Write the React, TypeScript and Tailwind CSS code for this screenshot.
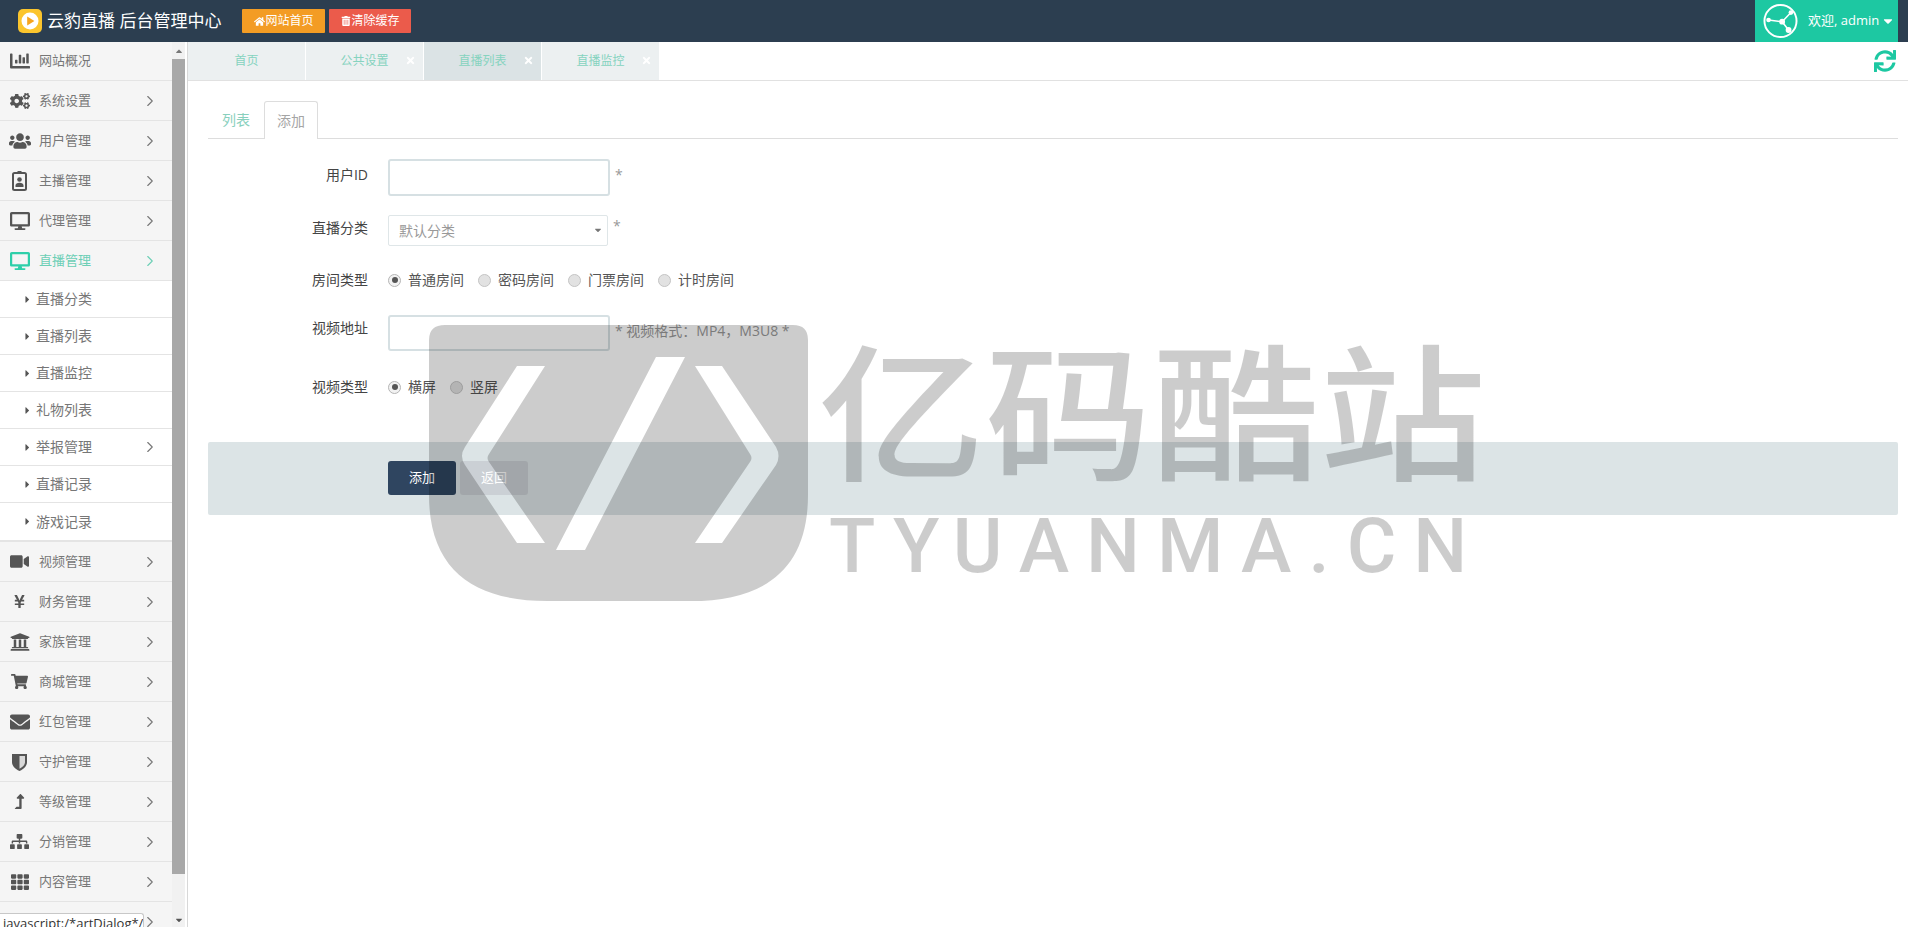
import type { ReactNode } from "react";
import { ChevronRight } from "lucide-react";
import {
  FaCaretDown,
  FaCaretRight,
  FaCaretUp,
  FaChartBar,
  FaCogs,
  FaDesktop,
  FaEnvelope,
  FaHome,
  FaLevelUpAlt,
  FaShoppingCart,
  FaSitemap,
  FaSync,
  FaTh,
  FaTimes,
  FaTrashAlt,
  FaUniversity,
  FaUsers,
  FaVideo,
  FaYenSign,
} from "react-icons/fa";

function BadgeIcon() {
  return (
    <svg width="15" height="20" viewBox="0 0 15 20">
      <rect x="1" y="2" width="13" height="17" rx="1.5" fill="#f5f5f5" stroke="#555" strokeWidth="2" />
      <rect x="5.5" y="0" width="4" height="3" fill="#555" />
      <circle cx="7.5" cy="8.5" r="2.3" fill="#555" />
      <path d="M3.5 16v-1.5c0-1.8 1.6-2.7 4-2.7s4 .9 4 2.7V16z" fill="#555" />
    </svg>
  );
}

function ShieldIcon() {
  return (
    <svg width="15" height="18" viewBox="0 0 15 18">
      <path d="M0 1h15v8c0 4-3 7-7.5 9C3 16 0 13 0 9z" fill="#555" />
      <path d="M7.5 3H13v6c0 3-2 5-5.5 6.7z" fill="#d9d9d9" />
    </svg>
  );
}

const topMenus = [
  { label: "系统设置", icon: <FaCogs size={20} /> },
  { label: "用户管理", icon: <FaUsers size={22} /> },
  { label: "主播管理", icon: <BadgeIcon /> },
  { label: "代理管理", icon: <FaDesktop size={20} /> },
];

const subMenus = ["直播分类", "直播列表", "直播监控", "礼物列表", "举报管理", "直播记录", "游戏记录"];

const bottomMenus = [
  { label: "视频管理", icon: <FaVideo size={19} /> },
  { label: "财务管理", icon: <FaYenSign size={15} /> },
  { label: "家族管理", icon: <FaUniversity size={20} /> },
  { label: "商城管理", icon: <FaShoppingCart size={17} /> },
  { label: "红包管理", icon: <FaEnvelope size={20} /> },
  { label: "守护管理", icon: <ShieldIcon /> },
  { label: "等级管理", icon: <FaLevelUpAlt size={15} /> },
  { label: "分销管理", icon: <FaSitemap size={19} /> },
  { label: "内容管理", icon: <FaTh size={18} /> },
];

const pageTabs = [
  { label: "首页", closable: false, active: false },
  { label: "公共设置", closable: true, active: false },
  { label: "直播列表", closable: true, active: true },
  { label: "直播监控", closable: true, active: false },
];

function MenuRow({ label, icon, active, first }: { label: string; icon: ReactNode; active?: boolean; first?: boolean }) {
  return (
    <div
      className={`flex shrink-0 items-center border-b border-[#e4e4e4] bg-[#f5f5f5] text-[13px] ${first ? "h-[39px]" : "h-10"} ${active ? "text-[#6ccfb5]" : "text-[#777]"}`}
    >
      <span className={`flex w-[39px] justify-center ${active ? "text-[#2ecfa9]" : "text-[#555]"}`}>{icon}</span>
      <span className="flex-1">{label}</span>
      {!first && <ChevronRight size={18} strokeWidth={1.5} className="mr-[13px]" />}
    </div>
  );
}

function Radio({ label, checked }: { label: string; checked?: boolean }) {
  return (
    <label className="flex items-center gap-[7px] text-sm text-[#555]">
      <span
        className={`flex size-[13px] items-center justify-center rounded-full border ${checked ? "border-[#b5b5b5] bg-[#f2f2f2]" : "border-[#c4c4c4] bg-[#e2e2e2]"}`}
      >
        {checked && <span className="size-[6px] rounded-full bg-[#555]" />}
      </span>
      {label}
    </label>
  );
}

function FormLabel({ children }: { children: ReactNode }) {
  return <span className="w-[160px] shrink-0 text-right text-sm text-[#444]">{children}</span>;
}

function Watermark() {
  return (
    <div className="pointer-events-none absolute inset-0 z-10 overflow-hidden">
      <svg className="absolute left-[429px] top-[325px]" width="380" height="277" viewBox="0 0 380 277">
        <path
          fillRule="evenodd"
          fill="rgba(0,0,0,0.2)"
          d="M16 0H364Q379 0 379 15V170C379 245 335 276 262 276H118C45 276 0 245 0 170V15Q0 0 16 0Z
             M88 41H116L60 129Q57 133 60 137L116 218H88L36 140Q30 131 36 122Z
             M227 32H256L156 225H127Z
             M266 41H293L347 122Q352 131 347 140L293 218H266L321 137Q324 133 321 129Z"
        />
      </svg>
      <div className="absolute left-[818px] top-[317px] origin-top scale-y-[0.88] whitespace-nowrap font-['Noto_Sans_CJK_SC',sans-serif] text-[167px] font-medium leading-[1.2] text-black/20">
        亿码酷站
      </div>
      <div className="absolute left-[829px] top-[503px] whitespace-nowrap font-['Roboto',sans-serif] text-[76px] font-medium leading-[1.15] tracking-[17px] text-black/20">
        TYUANMA.CN
      </div>
    </div>
  );
}

export default function App() {
  return (
    <div className="relative flex h-screen flex-col overflow-hidden bg-white font-['Open_Sans','Noto_Sans_CJK_SC',sans-serif]">
      <header className="flex h-[42px] shrink-0 items-center bg-[#2c3e50] pl-[18px] pr-[10px]">
        <svg width="24" height="24" viewBox="0 0 24 24">
          <rect width="24" height="24" rx="5" fill="#fbc52d" />
          <circle cx="12" cy="12" r="8.5" fill="#fff" />
          <path d="M9.2 7.5l7.2 4.5-7.2 4.5z" fill="#f7a51e" />
        </svg>
        <h1 className="ml-[5px] text-[17px] font-normal text-white">云豹直播 后台管理中心</h1>
        <a className="ml-[21px] flex h-6 w-[83px] items-center justify-center rounded-[1px] bg-[#f39c24] text-xs text-white">
          <FaHome size={11} />
          网站首页
        </a>
        <a className="ml-1 flex h-6 w-[82px] items-center justify-center rounded-[1px] bg-[#eb5b4b] text-xs text-white">
          <FaTrashAlt size={10} />
          清除缓存
        </a>
        <div className="ml-auto flex h-full w-[143px] items-center bg-[#1dc8a2] pl-2 text-white">
          <svg width="35" height="36" viewBox="0 0 36 36" fill="none" stroke="#fff" strokeWidth="1.6">
            <circle cx="18" cy="18" r="16.5" strokeWidth="2" />
            <path d="M5.7 17l14 1.7 9-9.4M19.7 18.7l6.6 8.6" />
            <g fill="#fff" stroke="none">
              <circle cx="5.7" cy="17" r="2.4" />
              <circle cx="19.7" cy="18.7" r="3" />
              <circle cx="28.7" cy="9.3" r="2.4" />
              <circle cx="26.3" cy="27.3" r="3" />
            </g>
          </svg>
          <span className="ml-[10px] text-[13px]">欢迎, admin</span>
          <FaCaretDown size={14} className="ml-[2px]" />
        </div>
      </header>

      <div className="flex min-h-0 flex-1">
        <aside className="flex w-[188px] shrink-0 border-r border-[#d8d8d8]">
          <nav className="flex w-[172px] flex-col overflow-hidden">
            <MenuRow first label="网站概况" icon={<FaChartBar size={20} />} />
            {topMenus.map((menu) => (
              <MenuRow key={menu.label} label={menu.label} icon={menu.icon} />
            ))}
            <MenuRow active label="直播管理" icon={<FaDesktop size={20} />} />
            <div className="border-b-2 border-[#e4e4e4]">
              {subMenus.map((name) => (
                <div key={name} className="flex h-[37px] items-center border-b border-[#e4e4e4] bg-white text-sm text-[#777] last:border-b-0">
                  <FaCaretRight size={11} className="ml-[22px] mr-[3px] text-[#555]" />
                  <span className="flex-1">{name}</span>
                  {name === "举报管理" && <ChevronRight size={18} strokeWidth={1.5} className="mr-[13px]" />}
                </div>
              ))}
            </div>
            {bottomMenus.map((menu) => (
              <MenuRow key={menu.label} label={menu.label} icon={menu.icon} />
            ))}
            <MenuRow label="" icon={<FaCogs size={16} />} />
          </nav>
          <div className="flex w-[13px] flex-col items-center bg-[#f1f1f1] text-[#777]">
            <div className="flex h-[17px] items-center justify-center">
              <FaCaretUp size={10} />
            </div>
            <div className="h-[815px] w-full shrink-0 bg-[#a8a8a8]" />
            <div className="mt-auto flex h-[14px] items-center justify-center">
              <FaCaretDown size={10} className="text-[#555]" />
            </div>
          </div>
        </aside>

        <main className="flex min-w-0 flex-1 flex-col">
          <div className="flex h-[39px] shrink-0 items-stretch border-b border-[#e1e1e1]">
            {pageTabs.map((tab) => (
              <div
                key={tab.label}
                className={`relative flex w-[118px] items-center justify-center border-r border-white text-xs text-[#86d3bf] ${tab.active ? "bg-[#dbe3e5]" : "bg-[#ecf0f1]"}`}
              >
                {tab.label}
                {tab.closable && <FaTimes size={11} className="absolute right-[7px] top-[13px] text-white" />}
              </div>
            ))}
            <FaSync size={22} className="ml-auto mr-3 mt-[8px] text-[#1dc8a2]" />
          </div>

          <div className="pl-5 pr-[10px] pt-[20px]">
            <div className="flex h-[38px] items-end border-b border-[#ddd] text-sm">
              <span className="flex h-[37px] w-14 items-center justify-center text-[#88d0bd]">列表</span>
              <span className="relative top-px flex h-[38px] w-[54px] items-center justify-center rounded-t-[3px] border border-b-0 border-[#ddd] bg-white text-[#a5a5a5]">
                添加
              </span>
            </div>

            <div className="mt-5 flex h-[37px] items-start">
              <FormLabel>
                <span className="relative top-[6px]">用户ID</span>
              </FormLabel>
              <input className="ml-5 h-[37px] w-[222px] rounded-[3px] border-2 border-[#d6e0e3] bg-white" />
              <span className="relative top-[6px] ml-[5px] text-sm text-[#999]">*</span>
            </div>

            <div className="mt-[19px] flex h-[31px] items-start">
              <FormLabel>
                <span className="relative top-[3px]">直播分类</span>
              </FormLabel>
              <div className="relative ml-5 flex h-[31px] w-[220px] items-center rounded-[2px] border border-[#dfe6e8] pl-[10px] text-sm text-[#999]">
                默认分类
                <FaCaretDown size={10} className="absolute right-[4px] top-[9px] text-[#777]" />
              </div>
              <span className="relative top-[1px] ml-[5px] text-sm text-[#999]">*</span>
            </div>

            <div className="mt-6 flex h-5 items-center">
              <FormLabel>房间类型</FormLabel>
              <div className="ml-5 flex gap-[14px]">
                <Radio checked label="普通房间" />
                <Radio label="密码房间" />
                <Radio label="门票房间" />
                <Radio label="计时房间" />
              </div>
            </div>

            <div className="mt-[25px] flex h-9 items-start">
              <FormLabel>
                <span className="relative top-[3px]">视频地址</span>
              </FormLabel>
              <input className="ml-5 h-9 w-[222px] rounded-[3px] border-2 border-[#d6e0e3] bg-white" />
              <span className="relative top-[6px] ml-[5px] text-sm text-[#999]">* 视频格式：MP4，M3U8 *</span>
            </div>

            <div className="mt-[26px] flex h-5 items-center">
              <FormLabel>视频类型</FormLabel>
              <div className="ml-5 flex gap-[14px]">
                <Radio checked label="横屏" />
                <Radio label="竖屏" />
              </div>
            </div>

            <div className="mt-[45px] flex h-[73px] items-center gap-1 rounded-[2px] bg-[#dce4e6] pb-[2px] pl-[180px]">
              <button className="h-[34px] w-[68px] rounded-[3px] bg-[#2f4560] text-[13px] text-white">添加</button>
              <button className="h-[34px] w-[68px] rounded-[3px] bg-[#cbd0d5] text-[13px] text-white">返回</button>
            </div>
          </div>
        </main>
      </div>

      <Watermark />

      <div className="absolute bottom-0 left-0 z-20 h-[14px] w-[144px] overflow-hidden rounded-tr-[3px] border-r border-t border-[#c8c8c8] bg-white pl-[3px] text-[13px] leading-[18px] text-[#333]">
        javascript:/*artDialog*/:
      </div>
    </div>
  );
}
